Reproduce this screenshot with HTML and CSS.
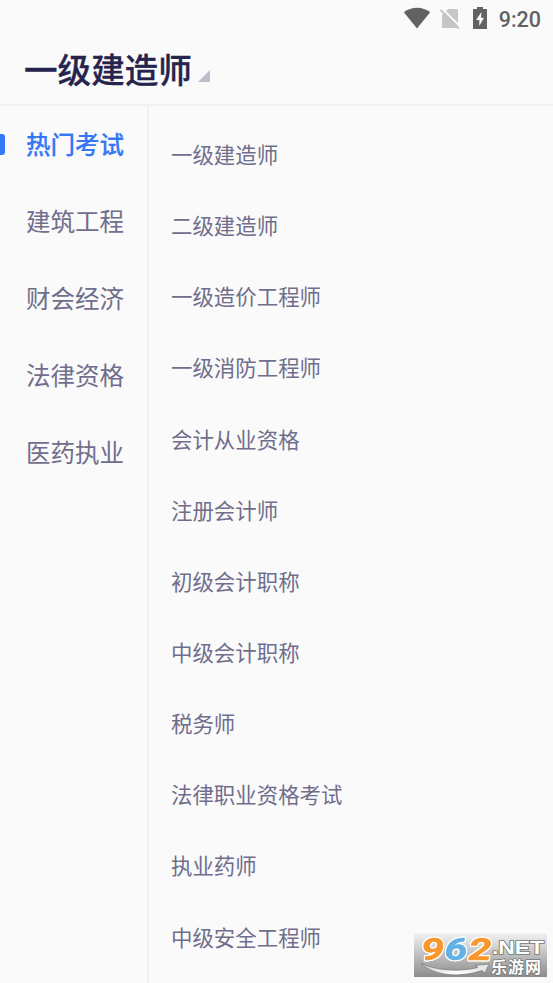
FILE: index.html
```html
<!DOCTYPE html>
<html lang="zh-CN">
<head>
    <meta charset="UTF-8">
    <meta name="viewport" content="width=device-width, initial-scale=1.0">
    <title>一级建造师</title>
    <link rel="stylesheet" href="styles.css">
</head>
<body>
    <div class="status-bar">
        <svg class="wifi" width="28" height="22" viewBox="0 0 28 22">
            <path d="M0.8 5.2C8.5-0.9 19.5-0.9 27.2 5.2L14 21.5Z" fill="#626262"/>
        </svg>
        <svg class="no-sim" width="20" height="22" viewBox="0 0 20 22">
            <path d="M8 1h8.500q1.500 0 1.500 1.500v17.500h-16v-13z" fill="#c6c6c6"/>
            <path d="M1.500 0L20.500 19" stroke="#fafafa" stroke-width="2"/>
            <path d="M0.500 2L19 20.500" stroke="#c2c2c2" stroke-width="1.800"/>
        </svg>
        <svg class="battery" width="14" height="22" viewBox="0 0 14 22">
            <path d="M4 0h6v2h4v20H0V2h4z" fill="#626262"/>
            <path d="M8.500 5L3 13h3.300v6L11 10.800H8z" fill="#fafafa"/>
        </svg>
        <span class="time">9:20</span>
    </div>
    <header class="header">
        <h1>一级建造师</h1>
        <div class="arrow"></div>
    </header>
    <div class="content">
        <ul class="category">
            <li class="active">热门考试</li>
            <li>建筑工程</li>
            <li>财会经济</li>
            <li>法律资格</li>
            <li>医药执业</li>
        </ul>
        <ul class="exam-list">
            <li>一级建造师</li>
            <li>二级建造师</li>
            <li>一级造价工程师</li>
            <li>一级消防工程师</li>
            <li>会计从业资格</li>
            <li>注册会计师</li>
            <li>初级会计职称</li>
            <li>中级会计职称</li>
            <li>税务师</li>
            <li>法律职业资格考试</li>
            <li>执业药师</li>
            <li>中级安全工程师</li>
        </ul>
    </div>
    <div class="watermark">
        <svg width="133" height="44" viewBox="0 0 133 44">
            <defs>
                <linearGradient id="swoosh" x1="0" y1="0" x2="1" y2="0">
                    <stop offset="0" stop-color="#cfcfcf"/>
                    <stop offset="0.5" stop-color="#ffffff"/>
                    <stop offset="1" stop-color="#e2e2e2"/>
                </linearGradient>
            </defs>
            <path d="M7 30.500C24 38 46 39 64 34.500L61 32.500L75 31L71 40L68 37.500C46 45 20 43 7 30.500Z" fill="url(#swoosh)" stroke="#777" stroke-width="0.700"/>
            <g class="digits">
                <text x="7" y="27" textLength="23" lengthAdjust="spacingAndGlyphs" fill="#f7962c" stroke="#f7962c">9</text>
                <text x="30.500" y="27" textLength="23" lengthAdjust="spacingAndGlyphs" fill="#62b1e4" stroke="#62b1e4">6</text>
                <text x="54.500" y="27" textLength="23" lengthAdjust="spacingAndGlyphs" fill="#f7962c" stroke="#f7962c">2</text>
            </g>
            <text class="net" x="78" y="21" textLength="52" lengthAdjust="spacingAndGlyphs">.NET</text>
            <text class="site" x="77" y="39.500" textLength="50">乐游网</text>
        </svg>
    </div>
</body>
</html>
```

FILE: styles.css
```css
* {
    box-sizing: border-box;
}
body {
    margin: 0;
    height: 983px;
    overflow: hidden;
    display: flex;
    flex-direction: column;
    background-color: #fafafa;
    color: #706e8c;
    font-family: "Noto Sans CJK SC", sans-serif;
}
ul {
    margin: 0;
    padding: 0;
    list-style: none;
}
.status-bar {
    display: flex;
    justify-content: flex-end;
    align-items: center;
    height: 37px;
    padding-right: 12px;
}
.wifi {
    margin-top: -2px;
}
.no-sim {
    margin-left: 9px;
}
.battery {
    margin-left: 13px;
    margin-top: -1px;
}
.time {
    margin-left: 12px;
    padding-top: 2px;
    font-family: Roboto, sans-serif;
    font-size: 21.500px;
    font-weight: 500;
    line-height: 37px;
    color: #626262;
}
.header {
    display: flex;
    height: 69px;
    padding-left: 24px;
    border-bottom: 2px solid #f1f1f1;
}
.header h1 {
    margin: 0;
    font-size: 33.600px;
    font-weight: 500;
    line-height: 64px;
    color: #26244c;
    -webkit-text-stroke: 0.300px #26244c;
}
.arrow {
    width: 12px;
    height: 12px;
    margin: 33px 0 0 6px;
    background-color: #bdbdcb;
    clip-path: polygon(100% 0, 100% 100%, 0 100%);
}
.content {
    display: flex;
    flex: 1;
}
.category {
    width: 149px;
    border-right: 2px solid #f1f1f1;
}
.category li {
    position: relative;
    height: 76.900px;
    padding-left: 26px;
    font-size: 24.500px;
    line-height: 76.900px;
}
.category .active {
    color: #3478f6;
    font-weight: 500;
    -webkit-text-stroke: 0.200px #3478f6;
}
.category .active::before {
    content: "";
    position: absolute;
    left: 0;
    top: 28px;
    width: 5px;
    height: 21px;
    background-color: #3478f6;
    border-radius: 0 3px 3px 0;
}
.exam-list {
    padding: 12px 0 0 22px;
}
.exam-list li {
    height: 71.150px;
    font-size: 21.450px;
    line-height: 71.150px;
}
.watermark {
    position: absolute;
    left: 414px;
    top: 933px;
    width: 133px;
    height: 44px;
    background: linear-gradient(#f2f2f2, #8c8c8c);
}
.watermark svg {
    display: block;
    overflow: visible;
}
.digits {
    font-family: Roboto, sans-serif;
    font-size: 32px;
    font-weight: bold;
    font-style: italic;
    stroke-width: 0.500px;
    filter: drop-shadow(1px 0 0 #fff) drop-shadow(-1px 0 0 #fff) drop-shadow(0 1px 0 #fff) drop-shadow(0 -1px 0 #fff);
}
.net {
    font-family: "Liberation Sans", sans-serif;
    font-size: 18.500px;
    font-weight: bold;
    fill: #fff;
    stroke: #777;
    stroke-width: 1.500px;
    paint-order: stroke;
}
.site {
    font-size: 16px;
    font-weight: bold;
    fill: #fff;
    stroke: #777;
    stroke-width: 1.500px;
    paint-order: stroke;
}
```
